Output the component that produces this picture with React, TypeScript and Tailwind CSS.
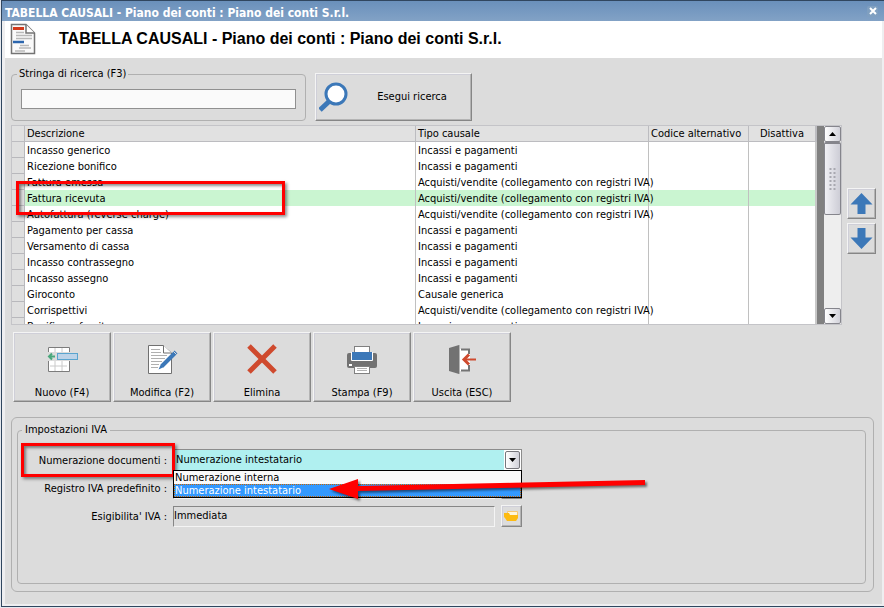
import type { ReactNode } from "react";

interface CausaleRow {
  descrizione: string;
  tipo: string;
}

const INCASSI = "Incassi e pagamenti";
const ACQUISTI = "Acquisti/vendite (collegamento con registri IVA)";

const TITLE = "TABELLA CAUSALI - Piano dei conti : Piano dei conti S.r.l.";

const SELECTED = "Fattura ricevuta";

const ROWS: CausaleRow[] = [
  { descrizione: "Incasso generico", tipo: INCASSI },
  { descrizione: "Ricezione bonifico", tipo: INCASSI },
  { descrizione: "Fattura emessa", tipo: ACQUISTI },
  { descrizione: "Fattura ricevuta", tipo: ACQUISTI },
  { descrizione: "Autofattura (reverse charge)", tipo: ACQUISTI },
  { descrizione: "Pagamento per cassa", tipo: INCASSI },
  { descrizione: "Versamento di cassa", tipo: INCASSI },
  { descrizione: "Incasso contrassegno", tipo: INCASSI },
  { descrizione: "Incasso assegno", tipo: INCASSI },
  { descrizione: "Giroconto", tipo: "Causale generica" },
  { descrizione: "Corrispettivi", tipo: ACQUISTI },
  { descrizione: "Bonifico a fornitore", tipo: INCASSI },
];

const RAISED =
  "border border-t-[#f4f4f4] border-l-[#f4f4f4] border-r-[#868686] border-b-[#868686] bg-[#dcdcdc] shadow-[inset_-1px_-1px_0_#b4b4b4,inset_1px_1px_0_#cfcfd8]";

function DocumentIcon() {
  return (
    <svg width="26" height="32" viewBox="0 0 26 32" aria-hidden="true">
      <path d="M1.5 1.5H16L24.500 10V30.500H1.500Z" fill="#fafafa" stroke="#747474" strokeWidth="1.500" />
      <path d="M16 1.500V10H24.500" fill="#fff" stroke="#747474" strokeWidth="1.500" />
      <path d="M3 5.500H14" stroke="#d33a1c" strokeWidth="3" />
      <path d="M6 9.500H14M6 12.500H22M6 15.500H22" stroke="#b9b9b9" strokeWidth="1.500" />
      <path d="M3 19H14" stroke="#2c66ad" strokeWidth="2.500" />
      <path d="M10 22.500H19M9 25H21M5 28H15" stroke="#b9b9b9" strokeWidth="1.500" />
    </svg>
  );
}

function SearchIcon() {
  return (
    <svg width="30" height="30" viewBox="0 0 30 30" aria-hidden="true">
      <path d="M1 28L10 19.500" stroke="#3c78b8" strokeWidth="5" />
      <circle cx="17" cy="12" r="10" fill="#fff" stroke="#3c78b8" strokeWidth="3" />
    </svg>
  );
}

function NewIcon() {
  return (
    <svg width="32" height="32" viewBox="0 0 32 32" aria-hidden="true">
      <path d="M2 4H23V9H2ZM2 18H23V28H2Z" fill="#fff" />
      <path d="M9 4V9M16 4V9M9 18V28M16 18V28M4 23H21" stroke="#cacaca" />
      <path d="M2.500 9V4.500H23.500V9M2.500 18V28.500H23.500V18" fill="none" stroke="#7c7c7c" />
      <path d="M9 13.500H3M6 10.500L3 13.500L6 16.500" fill="none" stroke="#4aa87c" strokeWidth="2" />
      <rect x="11.500" y="10.500" width="20" height="6" fill="#bdd3e8" stroke="#5aa5cf" />
    </svg>
  );
}

function EditIcon() {
  return (
    <svg width="32" height="32" viewBox="0 0 32 32" aria-hidden="true">
      <path d="M2.500 2.500H17L25.500 10V30.500H2.500Z" fill="#fff" stroke="#707070" />
      <path d="M17.500 2.500V10H25.500" fill="#fff" stroke="#707070" />
      <path d="M5 6.500H14M5 9.500H15M5 12.500H21M5 15.500H19M5 18.500H16M5 21.500H13M5 24.500H12" stroke="#b0b0b0" />
      <path d="M30 9L16 23" stroke="#3c78b8" strokeWidth="4" />
      <path d="M27.500 8.500L30.500 11.500" stroke="#dcdcdc" />
      <path d="M15 21L18 24L12.500 26.500Z" fill="#3c78b8" />
    </svg>
  );
}

function DeleteIcon() {
  return (
    <svg width="32" height="32" viewBox="0 0 32 32" aria-hidden="true">
      <path d="M3 3L29 29M29 3L3 29" stroke="#cf4a2e" strokeWidth="5" />
    </svg>
  );
}

function PrintIcon() {
  return (
    <svg width="32" height="32" viewBox="0 0 32 32" aria-hidden="true">
      <path d="M1 12Q1 10 3 10H29Q31 10 31 12V23Q31 25 29 25H3Q1 25 1 23Z" fill="#727272" />
      <path d="M5 9H27V17Q27 18 26 18H6Q5 18 5 17Z" fill="#fff" />
      <rect x="8.500" y="3.500" width="15" height="8" fill="#fff" stroke="#808080" />
      <rect x="6" y="9" width="20" height="8" fill="#3c78b8" />
      <rect x="3" y="21" width="3" height="2" fill="#fff" />
      <rect x="8.500" y="23.500" width="15" height="7" fill="#fff" stroke="#808080" />
      <path d="M11 25.500H21M11 27.500H21" stroke="#b0b0b0" />
    </svg>
  );
}

function ExitIcon() {
  return (
    <svg width="32" height="32" viewBox="0 0 32 32" aria-hidden="true">
      <path d="M13 6H24V28H13Z" fill="#fff" />
      <path d="M15 6.500H23V11M15 27.500H23V22" fill="none" stroke="#747474" strokeWidth="2" />
      <path d="M3 5L13 2V31L3 28Z" fill="#727272" />
      <path d="M13.500 2V31" stroke="#b4b4b4" />
      <path d="M30 16.500H19" stroke="#cf4a2e" strokeWidth="2" />
      <path d="M23 11.500L18 16.500L23 21.500" fill="none" stroke="#cf4a2e" strokeWidth="3" />
    </svg>
  );
}

function FolderIcon() {
  return (
    <svg width="15" height="12" viewBox="0 0 15 12" aria-hidden="true">
      <path d="M3.500 1.500H13.500V6H3.500Z" fill="#fff6dc" stroke="#f7c873" />
      <path d="M0 3H5L6 5H14V8L12 11H3L1 8L0 7Z" fill="#fdbb12" />
    </svg>
  );
}

function MoveIcon({ down = false }: { down?: boolean }) {
  return (
    <svg width="23" height="23" viewBox="0 0 23 23" aria-hidden="true">
      <path
        d={down ? "M7.500 1H15.500V10.500H22.500L11.500 22L0.500 10.500H7.500Z" : "M11.500 1L22.500 12.500H15.500V22H7.500V12.500H0.500Z"}
        fill="#3c78b8"
      />
    </svg>
  );
}

function Triangle({ down = false }: { down?: boolean }) {
  return (
    <svg width="7" height="4" viewBox="0 0 7 4" aria-hidden="true">
      <path d={down ? "M0 0H7L3.500 4Z" : "M0 4H7L3.500 0Z"} fill="#000" />
    </svg>
  );
}

function ToolbarButton({ label, children }: { label: string; children: ReactNode }) {
  return (
    <button type="button" className={`flex h-[70px] w-[98px] flex-col items-center justify-between pt-2.5 ${RAISED}`}>
      {children}
      <span className="leading-4">{label}</span>
    </button>
  );
}

function ScrollBar() {
  const step =
    "flex h-4 w-full items-center justify-center rounded-xs border border-[#85858c] bg-linear-to-r from-white to-[#d2d2da]";
  return (
    <div className="flex w-[17px] flex-col bg-[#eeeeee]">
      <button type="button" aria-label="Scorri su" className={step}>
        <Triangle />
      </button>
      <div className="flex h-[73px] flex-col items-center justify-center rounded-xs border border-t-2 border-[#85858c] bg-linear-to-r from-[#f0f0f4] to-[#cdcdd6]">
        <svg width="7" height="24" viewBox="0 0 7 24" aria-hidden="true">
          <path d="M1.500 1V24M5.500 1V24" stroke="#a8a8b0" strokeWidth="2" strokeDasharray="2 2" />
        </svg>
      </div>
      <div className="flex-1" />
      <button type="button" aria-label="Scorri giù" className={step}>
        <Triangle down />
      </button>
    </div>
  );
}

function CausaliTable() {
  const head = "border-r border-b border-[#bcbcc0] bg-[#e1e1e1] p-0 pt-px pl-0.5 leading-[14px] font-normal";
  const cell = "border-r border-[#c0c0c0] p-0 pl-0.5";
  return (
    <div className="relative min-w-0 flex-1">
      <div className="flex h-[200px] overflow-hidden border border-[#c4c4c8] bg-white">
        <div className="min-w-0 flex-1 overflow-hidden">
          <table className="w-full table-fixed border-separate border-spacing-0 text-left leading-[15px] whitespace-nowrap">
            <colgroup>
              <col className="w-[13px]" />
              <col />
              <col className="w-[233px]" />
              <col className="w-[100px]" />
              <col className="w-[68px]" />
            </colgroup>
            <thead>
              <tr className="h-4">
                <th className={head} aria-label="Riga" />
                <th className={head}>Descrizione</th>
                <th className={head}>Tipo causale</th>
                <th className={head}>Codice alternativo</th>
                <th className="border-r-2 border-b border-[#bcbcc0] bg-[#e1e1e1] p-0 pt-px text-center leading-[14px] font-normal">
                  Disattiva
                </th>
              </tr>
            </thead>
            <tbody>
              {ROWS.map((row) => (
                <tr key={row.descrizione} className={row.descrizione === SELECTED ? "h-4 bg-[#caf5d1]" : "h-4 bg-white"}>
                  <td className="border-r border-b border-[#b8b8bc] bg-[#dfdfdf] p-0" />
                  <td className={cell}>{row.descrizione}</td>
                  <td className={cell}>{row.tipo}</td>
                  <td className={cell} />
                  <td className="border-r-2 border-[#c8c8c8] p-0" />
                </tr>
              ))}
            </tbody>
          </table>
        </div>
        <div className="w-[7px] bg-[#808080]" />
        <ScrollBar />
      </div>
      <div className="absolute top-14 left-[5px] h-[34px] w-[269px] border-3 border-[#ff0000] shadow-[2px_2px_3px_#00000070,inset_2px_2px_3px_#00000070]" />
    </div>
  );
}

function LookupButton({ label }: { label: string }) {
  return (
    <button type="button" aria-label={label} className={`flex h-[22px] w-[21px] items-center justify-center ${RAISED}`}>
      <FolderIcon />
    </button>
  );
}

function LookupField({ id, label, value }: { id: string; label: string; value: string }) {
  return (
    <div className="flex h-[22px] items-center">
      <label htmlFor={id} className="w-[147px] pt-[3px] pr-0.5 text-right">
        {label}
      </label>
      <input
        id={id}
        readOnly
        value={value}
        className="mr-1.5 ml-1 h-[21px] w-[322px] border border-t-[#868686] border-r-[#f4f4f4] border-b-[#f4f4f4] border-l-[#868686] bg-[#dcdcdc] pb-0.5"
      />
      <LookupButton label={`Cerca ${label}`} />
    </div>
  );
}

function NumerazioneField() {
  return (
    <div className="relative flex h-[22px] items-center">
      <label htmlFor="numerazione" className="w-[147px] pt-0.5 pr-0.5 text-right">
        Numerazione documenti :
      </label>
      <div className="relative ml-1 flex h-[22px] w-[349px] border border-[#8c8c8c] bg-white">
        <select
          id="numerazione"
          defaultValue="intestatario"
          className="h-full flex-1 appearance-none bg-[#b0f0f0] pt-px pl-0.5"
        >
          <option value="interna">Numerazione interna</option>
          <option value="intestatario">Numerazione intestatario</option>
        </select>
        <button
          type="button"
          aria-label="Apri elenco"
          className="m-px flex w-[15px] items-center justify-center rounded-xs border border-[#77777c] bg-linear-to-r from-white to-[#d2d2da]"
        >
          <Triangle down />
        </button>
        <ul
          role="listbox"
          aria-label="Numerazione documenti"
          className="absolute top-full -right-px -left-px z-10 border border-black bg-[#fafafa] leading-[13px]"
        >
          <li role="option" aria-selected="false" className="pl-px">
            Numerazione interna
          </li>
          <li role="option" aria-selected="true" className="bg-[#3399ff] pl-px text-white outline-1 -outline-offset-1 outline-[#cc6600] outline-dotted">
            Numerazione intestatario
          </li>
        </ul>
      </div>
      <div className="absolute -top-1.5 -left-px h-[34px] w-[154px] border-3 border-[#ff0000] shadow-[2px_2px_3px_#00000070,inset_2px_2px_3px_#00000070]" />
      <svg
        className="absolute top-6 left-[306px] z-20 drop-shadow-[2px_2px_1px_#00000080]"
        width="320"
        height="30"
        viewBox="0 0 320 30"
        aria-hidden="true"
      >
        <path d="M1 16L30 6V13L317 7V12L30 18V26Z" fill="#ff0000" />
      </svg>
    </div>
  );
}

export default function App() {
  return (
    <div className="flex min-h-screen flex-col bg-[#e4e8ee] pb-px pl-px font-['DejaVu_Sans_Condensed','DejaVu_Sans',sans-serif] text-[11px] text-black">
      <div className="flex flex-1 flex-col border-t border-b border-l border-[#30465f] bg-[#eeeef0] pr-0.5 pb-0.5">
        <header className="-mr-0.5 flex h-5 items-center justify-between bg-linear-to-b from-[#6a90bb] to-[#82a2c6] pt-1 pr-1.5 pl-[3px]">
          <span className="text-xs leading-4 font-bold whitespace-nowrap text-white">{TITLE}</span>
          <button
            type="button"
            aria-label="Chiudi"
            className="mb-1 flex size-[11px] items-center justify-center rounded-xs bg-[#7f9fc0]"
          >
            <svg width="8" height="8" viewBox="0 0 8 8" aria-hidden="true">
              <path d="M1 1L7 7M7 1L1 7" stroke="#fff" strokeWidth="2" />
            </svg>
          </button>
        </header>
        <div className="ml-[3px] flex h-[37px] items-center bg-white pb-px pl-[5px]">
          <DocumentIcon />
          <h1 className="pl-[23px] font-['Liberation_Sans',Arial,sans-serif] text-base leading-5 font-bold whitespace-nowrap">
            {TITLE}
          </h1>
        </div>

        <main className="ml-[3px] flex flex-1 flex-col bg-[#dcdcdc] pt-2 pr-1.5 pl-1.5">
          <div className="flex items-end gap-[9px]">
            <fieldset className="w-[295px] rounded-sm border border-[#b0b0b0] px-[9px] pb-[11px]">
              <legend className="-ml-1 px-0.5 leading-4">
                <label htmlFor="ricerca">Stringa di ricerca (F3)</label>
              </legend>
              <input
                id="ricerca"
                type="text"
                className="mt-[7px] block h-5 w-full border border-[#909090] bg-[#fafafa] px-1"
              />
            </fieldset>
            <button type="button" className={`flex h-12 w-[157px] items-center pl-[3px] ${RAISED}`}>
              <SearchIcon />
              <span className="flex-1 pt-px pl-1">Esegui ricerca</span>
            </button>
          </div>

          <div className="mt-1 flex gap-[5px]">
            <CausaliTable />
            <div className="flex w-[29px] flex-col justify-center gap-1 pb-2">
              <button type="button" aria-label="Sposta su" className={`flex h-[31px] items-center justify-center ${RAISED}`}>
                <MoveIcon />
              </button>
              <button type="button" aria-label="Sposta giù" className={`flex h-[31px] items-center justify-center ${RAISED}`}>
                <MoveIcon down />
              </button>
            </div>
          </div>

          <div className="mt-[7px] flex gap-0.5 pl-0.5">
            <ToolbarButton label="Nuovo (F4)">
              <NewIcon />
            </ToolbarButton>
            <ToolbarButton label="Modifica (F2)">
              <EditIcon />
            </ToolbarButton>
            <ToolbarButton label="Elimina">
              <DeleteIcon />
            </ToolbarButton>
            <ToolbarButton label="Stampa (F9)">
              <PrintIcon />
            </ToolbarButton>
            <ToolbarButton label="Uscita (ESC)">
              <ExitIcon />
            </ToolbarButton>
          </div>

          <section className="mt-[15px] mr-0.5 mb-3 flex flex-1 flex-col rounded-md border border-[#b0b0b0] px-[5px] pt-1 pb-[7px]">
            <fieldset className="mr-0.5 flex-1 rounded-sm border border-[#b0b0b0] px-1">
              <legend className="px-[3px] leading-4">Impostazioni IVA</legend>
              <div className="flex flex-col gap-1.5 pt-[11px]">
                <NumerazioneField />
                <LookupField id="registro" label="Registro IVA predefinito :" value="" />
                <LookupField id="esigibilita" label="Esigibilita' IVA :" value="Immediata" />
              </div>
            </fieldset>
          </section>
        </main>
      </div>
    </div>
  );
}
